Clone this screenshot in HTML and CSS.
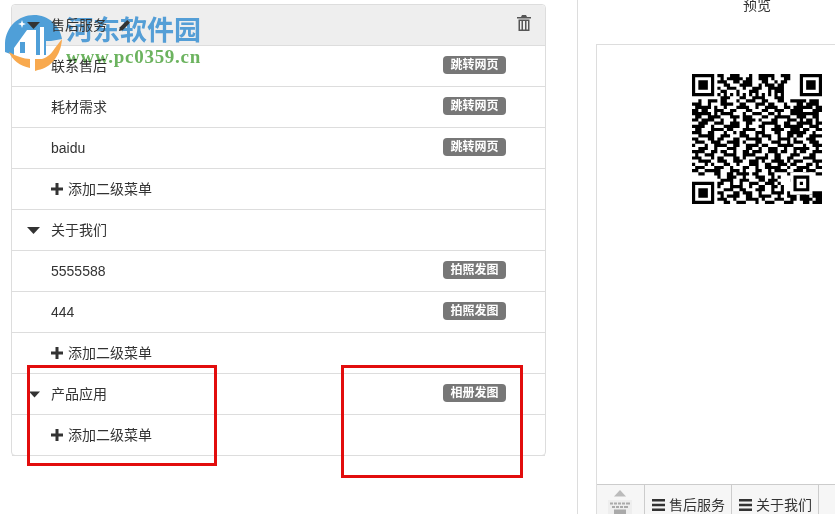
FILE: index.html
```html
<!DOCTYPE html>
<html lang="en">
<head>
    <meta charset="UTF-8">
    <meta name="viewport" content="width=device-width, initial-scale=1.0">
    <title>菜单设置</title>
    <link rel="stylesheet" href="styles.css">
</head>
<body>
    <div class="page">
        <!-- Menu editor -->
        <div class="menu-panel">
            <div class="row group-row panel-head">
                <svg class="caret" viewBox="0 0 13 7"><path d="M0 0h13L6.500 7z"/></svg>
                <span class="zh">售后服务</span>
                <svg class="pencil" viewBox="0 0 14 14"><path d="M10 1l3 3-8 8-4 1 1-4z"/></svg>
                <svg class="trash" viewBox="0 0 14 16"><path d="M5 0h4l1 2h4v1.500H0V2h4zM1.500 4.500h11V16h-11zM3 6v8.500h1.500V6zm3 0v8.500h2V6zm3.500 0v8.500H11V6z" fill-rule="evenodd"/></svg>
            </div>
            <div class="row sub-row"><span class="zh">联系售后</span><span class="label">跳转网页</span></div>
            <div class="row sub-row"><span class="zh">耗材需求</span><span class="label">跳转网页</span></div>
            <div class="row sub-row"><span>baidu</span><span class="label">跳转网页</span></div>
            <div class="row sub-row"><svg class="plus" viewBox="0 0 12 12"><path d="M4.500 0h3v4.500H12v3H7.500V12h-3V7.500H0v-3h4.500z"/></svg><span class="zh">添加二级菜单</span></div>

            <div class="row group-row">
                <svg class="caret" viewBox="0 0 13 7"><path d="M0 0h13L6.500 7z"/></svg>
                <span class="zh">关于我们</span>
            </div>
            <div class="row sub-row"><span>5555588</span><span class="label">拍照发图</span></div>
            <div class="row sub-row"><span>444</span><span class="label">拍照发图</span></div>
            <div class="row sub-row"><svg class="plus" viewBox="0 0 12 12"><path d="M4.500 0h3v4.500H12v3H7.500V12h-3V7.500H0v-3h4.500z"/></svg><span class="zh">添加二级菜单</span></div>

            <div class="row group-row">
                <svg class="caret caret-small" viewBox="0 0 13 7"><path d="M0 0h13L6.500 7z"/></svg>
                <span class="zh">产品应用</span>
                <span class="label">相册发图</span>
            </div>
            <div class="row sub-row"><svg class="plus" viewBox="0 0 12 12"><path d="M4.500 0h3v4.500H12v3H7.500V12h-3V7.500H0v-3h4.500z"/></svg><span class="zh">添加二级菜单</span></div>
        </div>

        <!-- Phone preview -->
        <div class="preview">
            <div class="preview-title">预览</div>
            <div class="phone">
                <div class="phone-body">
                    <svg class="qr" viewBox="0 0 41 41">
                        <path class="qr-data" d="M8 .5h2m2 0h3m3 0h1m2 0h5m2 0h3
                            M9 1.5h1m1 0h5m1 0h2m2 0h3m1 0h1m3 0h2
                            M8 2.500h3m2 0h2m1 0h3m3 0h2m2 0h1m1 0h2
                            M10 3.500h2m3 0h4m2 0h1m1 0h3m1 0h2
                            M8 4.500h1m2 0h3m2 0h1m2 0h3m2 0h5
                            M9 5.500h2m3 0h1m3 0h3m3 0h1m1 0h3
                            M8 6.500h1m1 0h1m1 0h1m1 0h1m1 0h1m1 0h1m1 0h1m1 0h1m1 0h1m1 0h1m1 0h1
                            M9 7.500h3m3 0h2m2 0h4m3 0h3
                            M2 8.500h1m2 0h3m1 0h2m3 0h1m2 0h3m2 0h2m3 0h2m2 0h3
                            M0 9.500h3m2 0h1m3 0h4m2 0h2m3 0h3m1 0h2m3 0h1m3 0h2
                            M1 10.500h5m1 0h1m2 0h1m3 0h4m2 0h1m2 0h4m2 0h2m1 0h3
                            M0 11.500h2m1 0h2m2 0h3m2 0h2m3 0h2m3 0h2m2 0h3m2 0h4
                            M0 12.500h6m1 0h1m1 0h4m3 0h1m2 0h3m2 0h2m1 0h1m3 0h3m1 0h1
                            M1 13.500h2m2 0h4m3 0h3m1 0h3m3 0h2m2 0h5m2 0h2
                            M0 14.500h2m1 0h4m2 0h1m3 0h1m2 0h4m1 0h1m3 0h2m3 0h3m1 0h1
                            M2 15.500h3m2 0h3m2 0h3m2 0h2m3 0h5m2 0h2m2 0h1
                            M0 16.500h4m2 0h1m3 0h5m2 0h1m3 0h2m3 0h2m1 0h4m1 0h1
                            M1 17.500h2m3 0h4m1 0h2m3 0h4m2 0h1m2 0h4m2 0h3
                            M0 18.500h3m2 0h2m3 0h1m2 0h1m1 0h2m3 0h3m3 0h2m2 0h3
                            M2 19.500h5m2 0h3m3 0h3m2 0h1m1 0h3m2 0h1m2 0h2m1 0h1
                            M0 20.500h2m3 0h2m1 0h2m3 0h2m2 0h5m2 0h1m2 0h4m1 0h1
                            M1 21.500h3m2 0h3m2 0h4m1 0h1m3 0h2m3 0h3m2 0h1m1 0h2
                            M0 22.500h1m3 0h1m2 0h4m2 0h2m2 0h4m1 0h2m3 0h5
                            M2 23.500h3m2 0h1m3 0h3m3 0h2m2 0h1m2 0h3m2 0h1m2 0h2
                            M0 24.500h4m2 0h2m1 0h2m2 0h1m2 0h2m1 0h3m2 0h3m1 0h2m2 0h1
                            M1 25.500h1m2 0h3m3 0h4m2 0h4m3 0h1m2 0h2m3 0h3
                            M0 26.500h3m3 0h1m1 0h2m3 0h2m1 0h1m3 0h4m2 0h2m2 0h2
                            M2 27.500h4m2 0h3m2 0h3m2 0h3m1 0h1m2 0h4m1 0h1m1 0h2
                            M0 28.500h1m3 0h1m1 0h1m3 0h2m2 0h1m3 0h3m2 0h2m2 0h3m1 0h2
                            M1 29.500h3m3 0h3m2 0h1m3 0h2m2 0h1m2 0h5m2 0h1m2 0h2
                            M0 30.500h2m2 0h5m3 0h3m1 0h1m3 0h2m2 0h1m1 0h4m2 0h3
                            M2 31.500h2m3 0h2m2 0h2m1 0h4m1 0h2m3 0h2m4 0h2
                            M8 32.500h1m2 0h3m2 0h1m3 0h3m2 0h1m1 0h1m5 0h3
                            M9 33.500h4m2 0h3m3 0h2m1 0h3m4 0h1
                            M8 34.500h2m2 0h1m2 0h1m2 0h3m2 0h3m1 0h1m5 0h3
                            M8 35.500h1m3 0h4m2 0h1m2 0h2m2 0h2m1 0h1m5 0h2
                            M10 36.500h3m2 0h2m3 0h3m2 0h1m2 0h1m5 0h1m1 0h1
                            M8 37.500h2m3 0h2m1 0h3m2 0h1m3 0h4m1 0h1m2 0h3
                            M9 38.500h1m1 0h4m2 0h2m2 0h4m2 0h1m2 0h3m1 0h2
                            M8 39.500h3m2 0h1m3 0h4m1 0h1m3 0h3m2 0h2m1 0h3
                            M10 40.500h2m2 0h3m3 0h1m2 0h3m3 0h3m3 0h1
                            M34 8.500h2m1 0h3M33 9.500h1m2 0h4M35 10.500h3m1 0h2M33 11.500h2m3 0h3
                            M34 12.500h1m1 0h4M33 13.500h3m2 0h2M36 14.500h2m1 0h1M34 15.500h4m1 0h2
                            M33 16.500h1m3 0h3M35 17.500h2m2 0h2M33 18.500h3m2 0h1M34 19.500h1m2 0h4
                            M36 20.500h3M33 21.500h2m2 0h3M35 22.500h1m2 0h3M33 23.500h4m2 0h1
                            M34 24.500h2m2 0h3M33 25.500h1m3 0h2M35 26.500h4M33 27.500h2m3 0h3
                            M36 28.500h2m1 0h1M34 29.500h3m2 0h2M33 30.500h1m2 0h3M35 31.500h2m2 0h2
                            M37 37.500h4M34 38.500h3m1 0h3M36 39.500h2m1 0h2M35 40.500h2m1 0h3"/>
                        <rect class="qr-clear" x="31" y="31" width="7" height="7"/>
                        <path fill-rule="evenodd" d="M0 0h7v7H0zM1 1v5h5V1zM2 2h3v3H2zM34 0h7v7h-7zM35 1v5h5V1zM36 2h3v3h-3zM0 34h7v7H0zM1 35v5h5v-5zM2 36h3v3H2zM32 32h5v5h-5zM33 33v3h3v-3zM34 34h1v1h-1z"/>
                    </svg>
                </div>
                <div class="tabbar">
                    <div class="tab-keyboard">
                        <svg viewBox="0 0 24 24" width="24" height="24">
                            <path class="kb-arrow" d="M6 6.500L12 0l6 6.500z"/>
                            <rect class="kb-case" x="0" y="10" width="24" height="14"/>
                            <path class="kb-keys" d="M2 12.500h3v2H2zM6 12.500h3v2H6zM10 12.500h3v2h-3zM14 12.500h3v2h-3zM18 12.500h4v2h-4zM4 16h3v2H4zM8 16h3v2H8zM12 16h3v2h-3zM16 16h4v2h-4zM6 19.500h12V24H6z"/>
                        </svg>
                    </div>
                    <div class="tab">
                        <svg class="bars" viewBox="0 0 13 12"><path d="M0 0h13v2.500H0zM0 4.700h13v2.500H0zM0 9.500h13V12H0z"/></svg>
                        <span>售后服务</span>
                    </div>
                    <div class="tab">
                        <svg class="bars" viewBox="0 0 13 12"><path d="M0 0h13v2.500H0zM0 4.700h13v2.500H0zM0 9.500h13V12H0z"/></svg>
                        <span>关于我们</span>
                    </div>
                    <div class="tab"></div>
                </div>
            </div>
        </div>
    </div>

    <!-- Annotations and watermark lying over the screenshot -->
    <div class="mark mark-left"></div>
    <div class="mark mark-right"></div>

    <svg class="wm-logo" viewBox="0 0 58 56">
        <path class="wm-blue" d="M0 37V28C1 12 13 0 29 0c14 0 26 10 28 24l-11 2H41v14H8z"/>
        <path class="wm-white" d="M9 33L22 15h9v25H9zM35 12h4v28h-4z"/>
        <path class="wm-blue" d="M15 27h5v11h-5z"/>
        <path class="wm-white" d="M13 9l3-1 1-3 1 3 3 1-3 1-1 3-1-3z"/>
        <path class="wm-orange" d="M4 37c4 2 7 4 11 5 3 1 7 2 10 2v9C15 51 7 45 4 37zM30 44h7c6-2 10-6 13-11l7-9c-1 16-11 29-24 31l-3 1z"/>
    </svg>
    <div class="wm-title">河东软件园</div>
    <div class="wm-url">www.pc0359.cn</div>
</body>
</html>
```

FILE: styles.css
```css
* {
    margin: 0;
    padding: 0;
    box-sizing: border-box;
}

html, body {
    height: 100%;
    overflow: hidden;
}

body {
    font-family: "Liberation Sans", "Noto Sans CJK SC", sans-serif;
    font-size: 14px;
    color: #333;
    background-color: #fff;
    position: relative;
}

.page {
    display: flex;
    height: 514px;
}

/* Menu editor */
.menu-panel {
    flex: none;
    width: 535px;
    height: 452px;
    margin: 4px 31px 0 11px;
    border: 1px solid #ddd;
    border-radius: 4px;
}

.row {
    display: flex;
    align-items: center;
    height: 41px;
    border-bottom: 1px solid #ddd;
    padding-right: 39px;
}

.panel-head {
    background-color: #eee;
    padding-right: 14px;
    border-radius: 4px 4px 0 0;
}

.panel-head .caret,
.panel-head .zh,
.panel-head .pencil {
    position: relative;
    z-index: 2;
}

.group-row {
    padding-left: 15px;
}

.sub-row {
    padding-left: 39px;
}

.zh {
    margin-bottom: 2px;
}

.caret {
    flex: none;
    width: 13px;
    height: 7px;
    margin-right: 11px;
    fill: #333;
}

.caret-small {
    width: 11px;
    margin-left: 2px;
}

.pencil {
    width: 13px;
    height: 13px;
    margin-left: 11px;
    fill: #333;
}

.trash {
    width: 14px;
    height: 16px;
    margin-left: auto;
    margin-bottom: 4px;
    fill: #555;
}

.plus {
    flex: none;
    width: 12px;
    height: 12px;
    margin: 0 5px 0 0;
    fill: #333;
}

.label {
    margin-left: auto;
    margin-bottom: 2px;
    width: 63px;
    height: 18px;
    line-height: 18px;
    text-align: center;
    font-size: 12px;
    font-weight: bold;
    color: #fff;
    background-color: #777;
    border-radius: 4px;
}

/* Phone preview */
.preview {
    flex: none;
    width: 258px;
    padding-left: 18px;
    border-left: 1px solid #ddd;
    margin-top: -4px;
    overflow: hidden;
}

.preview-title {
    width: 322px;
    height: 48px;
    text-align: center;
    line-height: 18px;
}

.phone {
    width: 322px;
    border: 1px solid #ddd;
}

.phone-body {
    height: 439px;
    padding-top: 29px;
    display: flex;
    justify-content: center;
    align-items: flex-start;
}

.qr {
    width: 130px;
    height: 130px;
    fill: #000;
}

.qr-data {
    fill: none;
    stroke: #000;
    stroke-width: 1;
}

.qr-clear {
    fill: #fff;
}

.tabbar {
    display: flex;
    height: 50px;
    background-color: #f6f6f6;
    border-top: 1px solid #ccc;
}

.tab-keyboard {
    flex: none;
    width: 48px;
    padding: 5px 0 0 11px;
    border-right: 1px solid #ccc;
}

.kb-arrow {
    fill: #bbb;
}

.kb-case {
    fill: #eee;
}

.kb-keys {
    fill: #aaa;
}

.tab {
    flex: none;
    width: 87px;
    height: 100%;
    display: flex;
    align-items: flex-start;
    padding: 11px 0 0 7px;
    border-right: 1px solid #ccc;
    line-height: 19px;
}

.bars {
    width: 13px;
    height: 12px;
    margin: 3px 4px 0 0;
    fill: #333;
}

/* Red annotation boxes */
.mark {
    position: absolute;
    border: 3px solid #e20d0d;
}

.mark-left {
    left: 27px;
    top: 365px;
    width: 190px;
    height: 101px;
}

.mark-right {
    left: 341px;
    top: 365px;
    width: 182px;
    height: 113px;
}

/* Site watermark */
.wm-logo {
    position: absolute;
    left: 5px;
    top: 15px;
    width: 58px;
    height: 56px;
}

.wm-blue {
    fill: #4f9fd8;
}

.wm-white {
    fill: #fff;
}

.wm-orange {
    fill: #f8a94e;
}

.wm-title {
    position: absolute;
    left: 66px;
    top: 13px;
    font-family: "Liberation Serif", "Noto Sans CJK SC", serif;
    font-size: 27px;
    line-height: 36px;
    font-weight: bold;
    color: #5aa9e6;
    mix-blend-mode: multiply;
}

.wm-url {
    position: absolute;
    left: 66px;
    top: 46px;
    font-family: "Liberation Serif", serif;
    font-size: 19px;
    line-height: 22px;
    font-weight: bold;
    letter-spacing: 0.72px;
    color: #6cb35f;
    mix-blend-mode: multiply;
}
```
